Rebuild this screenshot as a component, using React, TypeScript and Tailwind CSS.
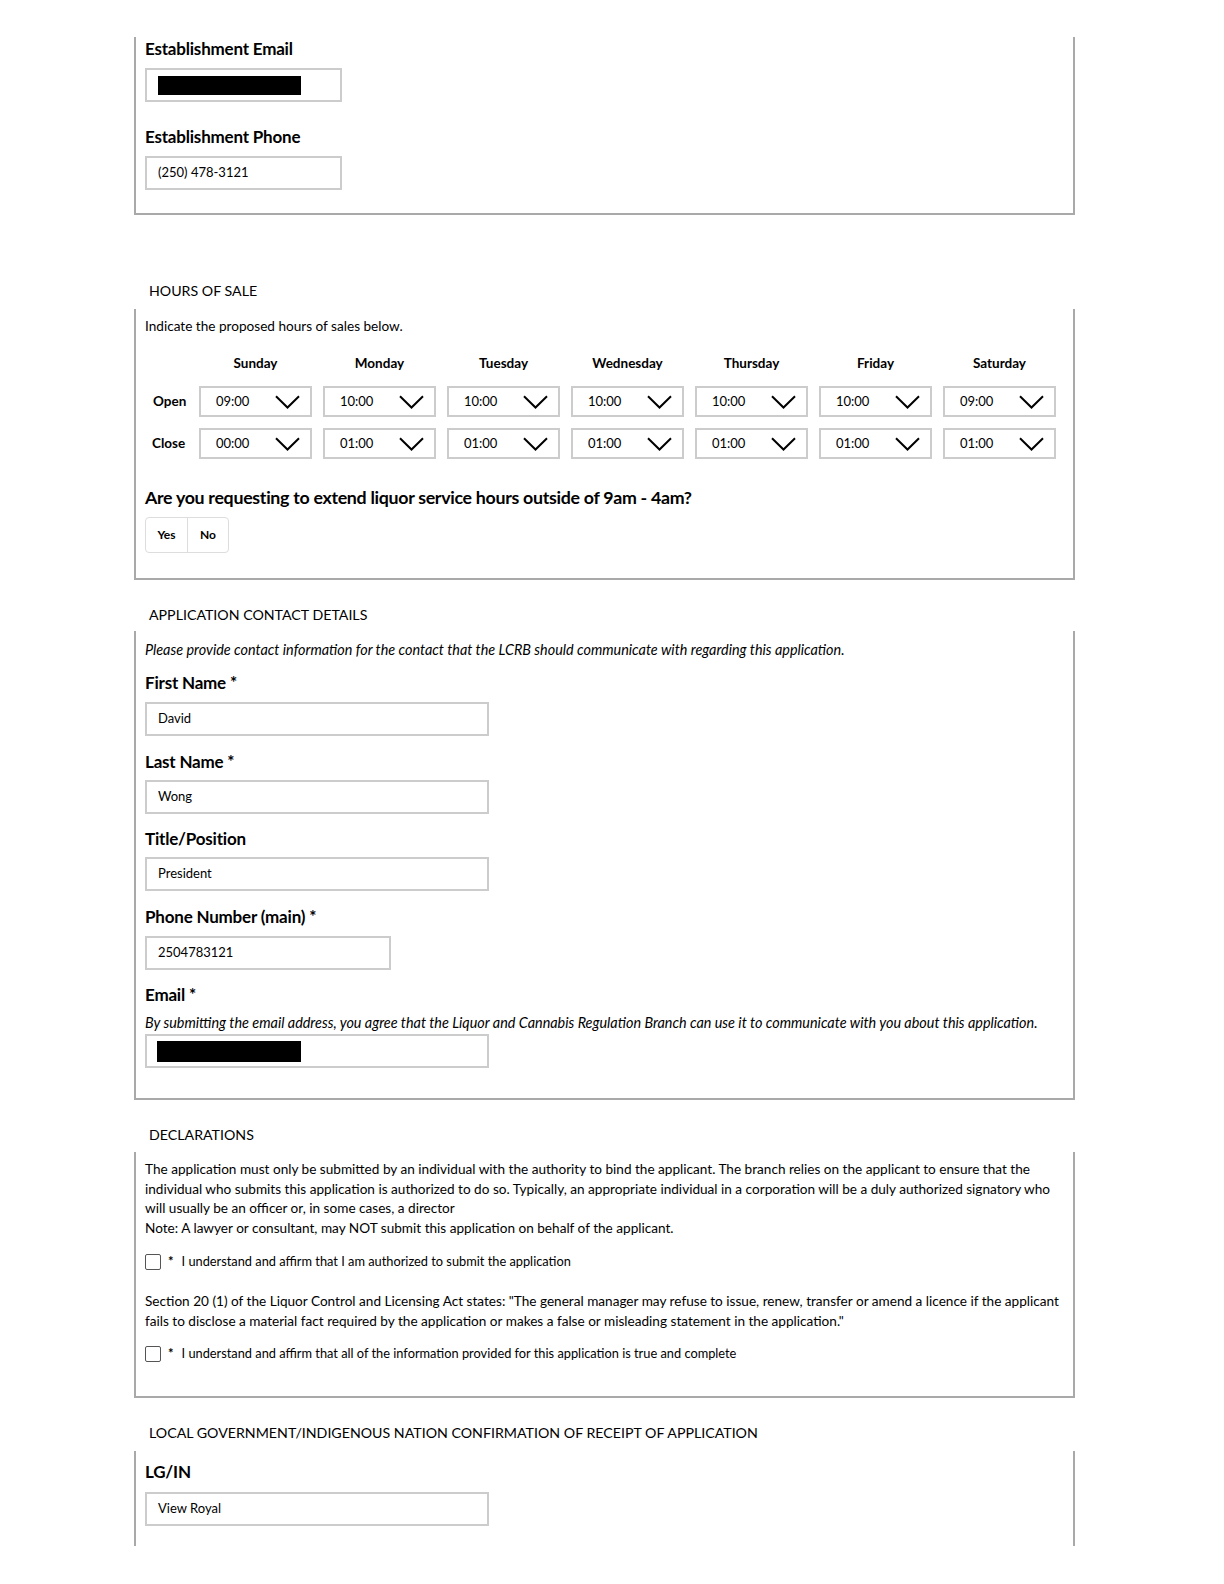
import type { ReactNode } from 'react'

const days = [
  { name: 'Sunday', open: '09:00', close: '00:00' },
  { name: 'Monday', open: '10:00', close: '01:00' },
  { name: 'Tuesday', open: '10:00', close: '01:00' },
  { name: 'Wednesday', open: '10:00', close: '01:00' },
  { name: 'Thursday', open: '10:00', close: '01:00' },
  { name: 'Friday', open: '10:00', close: '01:00' },
  { name: 'Saturday', open: '09:00', close: '01:00' },
]

const SectionTitle = ({ children }: { children: ReactNode }) => (
  <h2 className="ml-[15px] h-[20px] text-[14.2px] leading-[20px] uppercase">{children}</h2>
)

const Label = ({ children, className = '' }: { children: ReactNode; className?: string }) => (
  <div className={`h-[24px] text-[17px] leading-[24px] font-bold tracking-[-0.2px] ${className}`}>
    {children}
  </div>
)

const TextInput = ({
  value,
  width,
  className = '',
}: {
  value?: string
  width: string
  className?: string
}) => (
  <div
    className={`flex h-[34px] items-center border-2 border-[#cccccc] pl-[11px] text-[13px] ${width} ${className}`}
  >
    {value}
  </div>
)

const Redacted = ({ className = '' }: { className?: string }) => (
  <div className={`h-[34px] border-2 border-[#cccccc] ${className}`}>
    <div className="mt-[5px] ml-[10px] h-[21px] w-[144px] bg-black" />
  </div>
)

const TimeSelect = ({ value }: { value: string }) => (
  <div className="flex h-[31px] w-[113px] items-center justify-between border-2 border-[#cccccc] pr-[10px] pl-[15px] text-[13px]">
    <span>{value}</span>
    <svg width="25" height="14" viewBox="0 0 25 14" fill="none">
      <path d="M1 1.2 L12.5 12.5 L24 1.2" stroke="black" strokeWidth="2" />
    </svg>
  </div>
)

const Checkbox = ({ children }: { children: ReactNode }) => (
  <div className="flex h-[20px] items-center text-[12.8px]">
    <span className="h-[16px] w-[16px] rounded-[2px] border-[1.5px] border-[#555]" />
    <span className="ml-[7px] text-[13px] font-bold">*</span>
    <span className="ml-[8px]">{children}</span>
  </div>
)

export default function App() {
  return (
    <div className="min-h-[1584px] bg-white pt-[37px] font-['Lato',sans-serif] text-black">
      <div className="ml-[134px] w-[941px]">
        {/* establishment contact */}
        <section className="border-x-2 border-b-2 border-[#a9a9a9] pr-[9px] pb-[23px] pl-[9px]">
          <Label>Establishment Email</Label>
          <div className="mt-[7px] h-[34px] w-[197px] border-2 border-[#cccccc]">
            <div className="mt-[6px] ml-[11px] h-[19px] w-[143px] bg-black" />
          </div>
          <Label className="mt-[23px]">Establishment Phone</Label>
          <TextInput value="(250) 478-3121" width="w-[197px]" className="mt-[7px]" />
        </section>

        {/* hours of sale */}
        <div className="mt-[66px]">
          <SectionTitle>Hours of Sale</SectionTitle>
          <section className="mt-[8px] border-x-2 border-b-2 border-[#a9a9a9] pt-[7px] pb-[25px] pl-[9px]">
            <p className="h-[20px] text-[13.6px] leading-[20px]">Indicate the proposed hours of sales below.</p>
            <div className="mt-[17px] grid grid-cols-[43px_repeat(7,113px)] gap-x-[11px]">
              <div />
              {days.map((d) => (
                <div key={d.name} className="h-[20px] text-center text-[13.5px] leading-[20px] font-bold">
                  {d.name}
                </div>
              ))}
              <div className="mt-[13px] flex items-center pl-[8px] text-[13.5px] font-bold">Open</div>
              {days.map((d) => (
                <div key={d.name} className="mt-[13px]">
                  <TimeSelect value={d.open} />
                </div>
              ))}
              <div className="mt-[11px] flex items-center pl-[7px] text-[13.5px] font-bold">Close</div>
              {days.map((d) => (
                <div key={d.name} className="mt-[11px]">
                  <TimeSelect value={d.close} />
                </div>
              ))}
            </div>
            <div className="mt-[26px] h-[24px] text-[17.8px] leading-[24px] font-bold tracking-[-0.3px]">
              Are you requesting to extend liquor service hours outside of 9am - 4am?
            </div>
            <div className="mt-[8px] inline-flex h-[36px] rounded-[4px] border border-[#dddddd] text-[12px] font-bold">
              <span className="flex w-[42px] items-center justify-center border-r border-[#dddddd]">Yes</span>
              <span className="flex w-[40px] items-center justify-center">No</span>
            </div>
          </section>
        </div>

        {/* contact details */}
        <div className="mt-[25px]">
          <SectionTitle>Application Contact Details</SectionTitle>
          <section className="mt-[6px] border-x-2 border-b-2 border-[#a9a9a9] pt-[9px] pb-[30px] pl-[9px]">
            <p className="h-[20px] text-[14.4px] leading-[20px] italic">
              Please provide contact information for the contact that the LCRB should communicate with regarding this
              application.
            </p>
            <Label className="mt-[11px]">First Name *</Label>
            <TextInput value="David" width="w-[344px]" className="mt-[7px]" />
            <Label className="mt-[14px]">Last Name *</Label>
            <TextInput value="Wong" width="w-[344px]" className="mt-[6px]" />
            <Label className="mt-[13px]">Title/Position</Label>
            <TextInput value="President" width="w-[344px]" className="mt-[6px]" />
            <Label className="mt-[14px]">Phone Number (main) *</Label>
            <TextInput value="2504783121" width="w-[246px]" className="mt-[7px]" />
            <Label className="mt-[13px]">Email *</Label>
            <p className="mt-[6px] h-[20px] text-[14.4px] leading-[20px] italic">
              By submitting the email address, you agree that the Liquor and Cannabis Regulation Branch can use it to
              communicate with you about this application.
            </p>
            <Redacted className="mt-[1px] w-[344px]" />
          </section>
        </div>

        {/* declarations */}
        <div className="mt-[25px]">
          <SectionTitle>Declarations</SectionTitle>
          <section className="mt-[7px] border-x-2 border-b-2 border-[#a9a9a9] pt-[8px] pb-[32px] pl-[9px] text-[13.6px] leading-[19.7px]">
            <p>
              The application must only be submitted by an individual with the authority to bind the applicant. The
              branch relies on the applicant to ensure that the
              <br />
              individual who submits this application is authorized to do so. Typically, an appropriate individual in a
              corporation will be a duly authorized signatory who
              <br />
              will usually be an officer or, in some cases, a director
              <br />
              Note: A lawyer or consultant, may NOT submit this application on behalf of the applicant.
            </p>
            <div className="mt-[13px]">
              <Checkbox>I understand and affirm that I am authorized to submit the application</Checkbox>
            </div>
            <p className="mt-[20px]">
              Section 20 (1) of the Liquor Control and Licensing Act states: "The general manager may refuse to issue,
              renew, transfer or amend a licence if the applicant
              <br />
              fails to disclose a material fact required by the application or makes a false or misleading statement in
              the application."
            </p>
            <div className="mt-[13px]">
              <Checkbox>
                I understand and affirm that all of the information provided for this application is true and complete
              </Checkbox>
            </div>
          </section>
        </div>

        {/* local government */}
        <div className="mt-[25px]">
          <SectionTitle>Local Government/Indigenous Nation Confirmation of Receipt of Application</SectionTitle>
          <section className="mt-[8px] border-x-2 border-[#a9a9a9] pt-[9px] pb-[20px] pl-[9px]">
            <Label>LG/IN</Label>
            <TextInput value="View Royal" width="w-[344px]" className="mt-[8px]" />
          </section>
        </div>
      </div>
    </div>
  )
}
